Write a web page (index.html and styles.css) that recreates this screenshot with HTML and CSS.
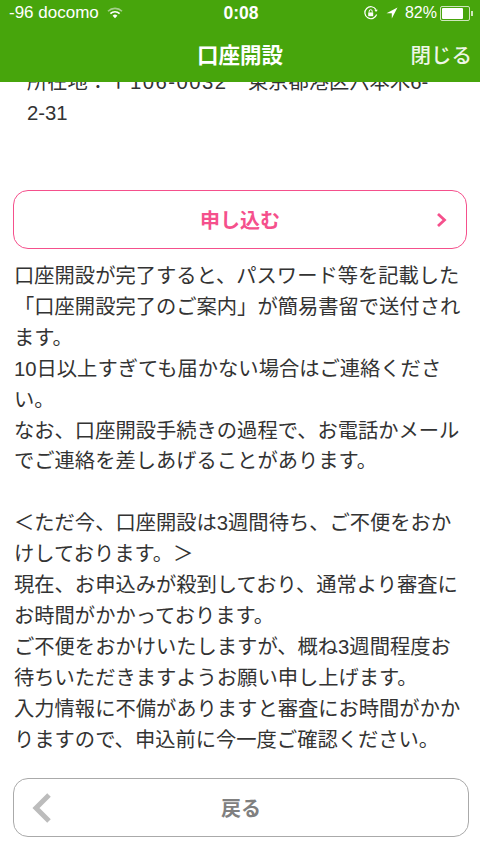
FILE: index.html
```html
<!DOCTYPE html>
<html lang="ja">
<head>
    <meta charset="UTF-8">
    <meta name="viewport" content="width=device-width, initial-scale=1.0">
    <title>口座開設</title>
    <link rel="stylesheet" href="styles.css">
</head>
<body>

<header class="top">
    <div class="status">
        <div class="status-left">
            <span>-96 docomo</span>
            <svg class="wifi" width="16" height="12" viewBox="0 0 16 12">
                <path d="M1 4.2a10 10 0 0 1 14 0" fill="none" stroke="#a5cf8c" stroke-width="1.6"/>
                <path d="M3.4 6.6a6.6 6.6 0 0 1 9.2 0" fill="none" stroke="#fff" stroke-width="1.6"/>
                <path d="M8 11.2 5.6 8.7a3.4 3.4 0 0 1 4.8 0z" fill="#fff"/>
            </svg>
        </div>
        <div class="status-time">0:08</div>
        <div class="status-right">
            <svg width="16" height="16" viewBox="0 0 16 16">
                <path d="M13.6 9.5A6 6 0 1 1 13 4.6" fill="none" stroke="#fff" stroke-width="1.2"/>
                <path d="M11.4 4.8h3.4L13 7z" fill="#fff"/>
                <rect x="5.2" y="7.4" width="5" height="3.8" fill="#fff"/>
                <path d="M6.2 7.4V6.2a1.5 1.5 0 0 1 3 0v1.2" fill="none" stroke="#fff"/>
            </svg>
            <svg class="arrow" width="12" height="12" viewBox="0 0 12 12">
                <path d="M11.5.5 5.8 11.5V6.2H.5z" fill="#fff"/>
            </svg>
            <span>82%</span>
            <div class="battery"><div class="battery-fill"></div></div>
            <div class="battery-tip"></div>
        </div>
    </div>
    <div class="title-bar">
        <h1>口座開設</h1>
        <a class="close">閉じる</a>
    </div>
</header>

<main class="scroll">
    <div class="content">
        <p class="address">所在地：<span class="zip">〒106-0032</span>　東京都港区六本木6-<br>2-31</p>

        <a class="btn btn-apply">
            申し込む
            <svg class="btn-next" width="12" height="16" viewBox="0 0 12 16">
                <path d="M2 2l6.5 6L2 14" fill="none" stroke="#f5508c" stroke-width="2.8"/>
            </svg>
        </a>

        <p class="text">口座開設が完了すると、パスワード等を記載した「口座開設完了のご案内」が簡易書留で送付されます。<br>
        10日以上すぎても届かない場合はご連絡ください。<br>
        なお、口座開設手続きの過程で、お電話かメールでご連絡を差しあげることがあります。</p>

        <p class="text notice">＜ただ今、口座開設は3週間待ち、ご不便をおかけしております。＞<br>
        現在、お申込みが殺到しており、通常より審査にお時間がかかっております。<br>
        ご不便をおかけいたしますが、概ね3週間程度お待ちいただきますようお願い申し上げます。<br>
        入力情報に不備がありますと審査にお時間がかかりますので、申込前に今一度ご確認ください。</p>

        <a class="btn btn-back">
            <svg class="btn-prev" width="22" height="32" viewBox="0 0 22 32">
                <path d="M18 3 5 16l13 13" fill="none" stroke="#bcbcbc" stroke-width="5"/>
            </svg>
            戻る
        </a>
    </div>
</main>

</body>
</html>
```

FILE: styles.css
```css
body {
    margin: 0;
    width: 480px;
    height: 854px;
    overflow: hidden;
    display: flex;
    flex-direction: column;
    background-color: #fff;
    color: #333;
    font-family: "Liberation Sans", "Noto Sans CJK JP", sans-serif;
}
.top {
    flex: none;
    height: 82px;
    background-color: #47a50c;
    color: #fff;
    position: relative;
    z-index: 1;
}
.status {
    height: 26px;
    padding: 0 9px;
    display: flex;
    justify-content: space-between;
    align-items: center;
    font-size: 17px;
    position: relative;
}
.status-left, .status-right {
    display: flex;
    align-items: center;
}
.wifi {
    margin-left: 8px;
}
.status-time {
    position: absolute;
    left: 0;
    right: 0;
    padding-left: 2px;
    text-align: center;
    font-weight: bold;
    font-size: 17.5px;
}
.status-right {
    font-size: 16px;
    margin-right: -2px;
}
.arrow {
    margin-left: 7px;
    margin-right: 7px;
}
.battery {
    width: 26px;
    height: 11px;
    margin-left: 3px;
    padding: 1px;
    border: 1px solid #cfe6bd;
    border-radius: 2px;
}
.battery-fill {
    width: 82%;
    height: 100%;
    background-color: #fff;
    border-radius: 1px;
}
.battery-tip {
    width: 2px;
    height: 5px;
    margin-left: 1px;
    background-color: #cfe6bd;
}
.title-bar {
    height: 56px;
    position: relative;
    display: flex;
    justify-content: center;
    align-items: center;
}
h1 {
    margin: 0;
    font-size: 21.5px;
    font-weight: bold;
    position: relative;
    top: -1px;
}
.close {
    position: absolute;
    right: 8px;
    top: 13px;
    font-size: 20.5px;
    font-weight: 500;
    color: #eef6e6;
}
.scroll {
    flex: 1;
    overflow: hidden;
}
.content {
    margin-top: -15px;
    padding: 0 13px;
}
.address {
    margin: 0 0 61px;
    padding: 0 14px;
    font-size: 20.3px;
    line-height: 31px;
    white-space: nowrap;
}
.zip {
    letter-spacing: 1.5px;
}
.btn {
    display: flex;
    align-items: center;
    justify-content: center;
    position: relative;
    box-sizing: border-box;
    height: 59px;
    background-color: #fff;
    border-radius: 15px;
    font-size: 20px;
    font-weight: bold;
}
.btn-apply {
    border: 1.5px solid #f5508c;
    color: #f5508c;
    width: 454px;
}
.btn-next {
    position: absolute;
    right: 18px;
    top: 21px;
}
.text {
    margin: 0;
    padding: 12px 1px 0;
    font-size: 20.3px;
    line-height: 30.9px;
}
.notice {
    padding-top: 31px;
}
.btn-back {
    border: 1.5px solid #aaa;
    color: #808080;
    width: 456px;
    margin-top: 22px;
}
.btn-prev {
    position: absolute;
    left: 17px;
    top: 13px;
}
```
